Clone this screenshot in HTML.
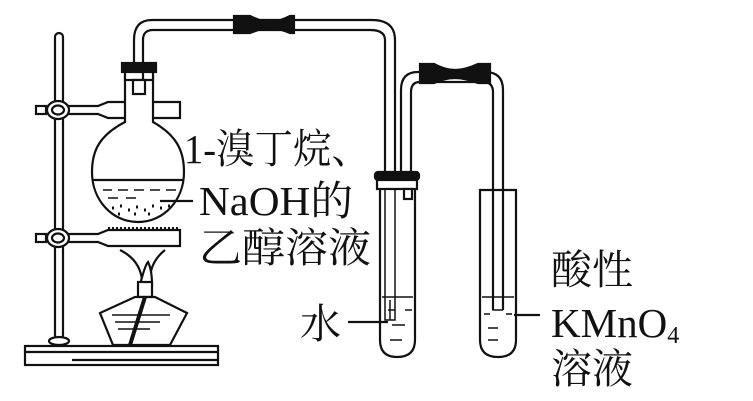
<!DOCTYPE html>
<html><head><meta charset="utf-8"><style>
html,body{margin:0;padding:0;background:#fff;}
svg{display:block}
text{font-family:"Liberation Serif","Noto Serif CJK SC","Noto Sans CJK SC",serif;fill:#111;}
</style></head><body>
<svg width="753" height="401" viewBox="0 0 753 401" xmlns="http://www.w3.org/2000/svg">
<g fill="none" stroke="#111" stroke-width="2.2">
<rect x="25" y="346" width="193" height="19" fill="#fff"/>
<line x1="25" y1="352" x2="218" y2="352"/>
<line x1="72" y1="360" x2="218" y2="360"/>
<rect x="55" y="33" width="8" height="306" rx="4" fill="#fff"/>
<ellipse cx="59" cy="341" rx="10" ry="4" fill="#fff"/>
<rect x="36" y="106" width="10" height="8"/>
<path d="M67 106 H98 L108 102 H180 V118 H108 L98 114 H67" fill="#fff"/>
<ellipse cx="58" cy="110" rx="11" ry="9" fill="#fff"/><ellipse cx="58" cy="110" rx="6" ry="4.5"/>
<rect x="36" y="234" width="10" height="8"/>
<path d="M67 234 H98 L108 230 H180 V246 H108 L98 242 H67" fill="#fff"/>
<ellipse cx="58" cy="238" rx="11" ry="9" fill="#fff"/><ellipse cx="58" cy="238" rx="6" ry="4.5"/>
<path d="M108 229 H178" stroke-dasharray="2 2" stroke-width="4"/>
<path d="M125 75 V122 C100 135 92 150 92 172 C92 200 112 222 138 222 C164 222 184 200 184 172 C184 150 176 135 153 122 V75" fill="#fff"/>
<path d="M93 180 H183"/>
<path d="M103 190 H112 M118 190 H128 M134 190 H144 M150 190 H160 M166 190 H176 M108 198 H118 M126 198 H136" stroke-width="1.5"/>
<path d="M112 208 h2 M120 206 h2 M128 210 h2 M136 207 h2 M144 210 h2 M152 206 h2 M160 208 h2 M168 206 h2 M118 214 h2 M134 214 h2 M148 214 h2" stroke-width="3"/>
<line x1="160" y1="201" x2="193" y2="201"/>
<rect x="122" y="63" width="34" height="9" fill="#111"/>
<rect x="125" y="72" width="28" height="8" fill="#fff"/>
<rect x="133" y="80" width="12" height="14" fill="#fff"/>
<path d="M134 64 V40 Q134 20 152 20 H372 Q395 20 395 40 V210" />
<path d="M143 80 V40 Q143 30 153 30 H370 Q385 30 385 40 V200" />
<path d="M234 16 H250 Q262 22 270 22 Q278 22 290 16 H294 V33 H290 Q278 28 270 28 Q262 28 250 33 H234 Z" fill="#111"/>
<path d="M380 188 V340 Q380 357 397 357 Q415 357 415 340 V188" fill="#fff"/>
<path d="M385 188 V320 H390 V300 M395 188 V320 H390" stroke-width="1.5"/>
<path d="M382 297 H413" stroke-width="1.5"/>
<path d="M388 310 H395 M405 310 H412 M392 325 H405 M390 340 H402" stroke-width="1.5"/>
<rect x="375" y="172" width="44" height="8" rx="3" fill="#111"/>
<rect x="377" y="180" width="40" height="9" fill="#fff"/>
<rect x="404" y="189" width="8" height="10" fill="#fff"/>
<path d="M401 172 V90 Q401 72 418 72 H485 Q503 72 503 90 V310" />
<path d="M411 172 V92 Q411 82 420 82 H483 Q493 82 493 92 V310" />
<path d="M420 64 H434 Q445 70 455 70 Q465 70 478 64 H490 V83 H478 Q465 78 455 78 Q445 78 434 83 H420 Z" fill="#111"/>
<path d="M480 190 V340 Q480 357 498 357 Q516 357 516 340 V190 Z" fill="none"/>
<path d="M493 190 V310 H503" stroke-width="1.5"/>
<path d="M482 297 H514 M484 314 H490 M506 314 H512 M488 328 H498 M488 340 H498" stroke-width="1.5"/>
<line x1="514" y1="315" x2="540" y2="315"/>
<line x1="348" y1="322" x2="388" y2="322"/>
<path d="M120 250 Q140 260 142 280 M165 250 Q150 262 150 280" fill="none"/>
<path d="M140 285 Q145 265 148 262 Q152 270 152 285 Z" fill="#fff"/>
<rect x="138" y="282" width="14" height="15" fill="#fff"/>
<path d="M135 297 L100 313 L113 345 H170 L187 313 L155 297 Z" fill="#fff"/>
<path d="M112 315 H170 M115 322 H160 M118 329 H150" stroke-width="1.5"/>
<path d="M145 297 L130 345" stroke-width="4"/>
</g>
<g font-size="41">
<text x="184" y="163" textLength="186" lengthAdjust="spacingAndGlyphs">1-溴丁烷、</text>
<text x="199" y="215" textLength="154" lengthAdjust="spacingAndGlyphs">NaOH的</text>
<text x="199" y="262" textLength="172" lengthAdjust="spacingAndGlyphs">乙醇溶液</text>
<text x="300" y="338">水</text>
<text x="551" y="284">酸性</text>
<text x="551" y="337">KMnO<tspan font-size="24" dy="6">4</tspan></text>
<text x="551" y="383">溶液</text>
</g>
</svg>
</body></html>
